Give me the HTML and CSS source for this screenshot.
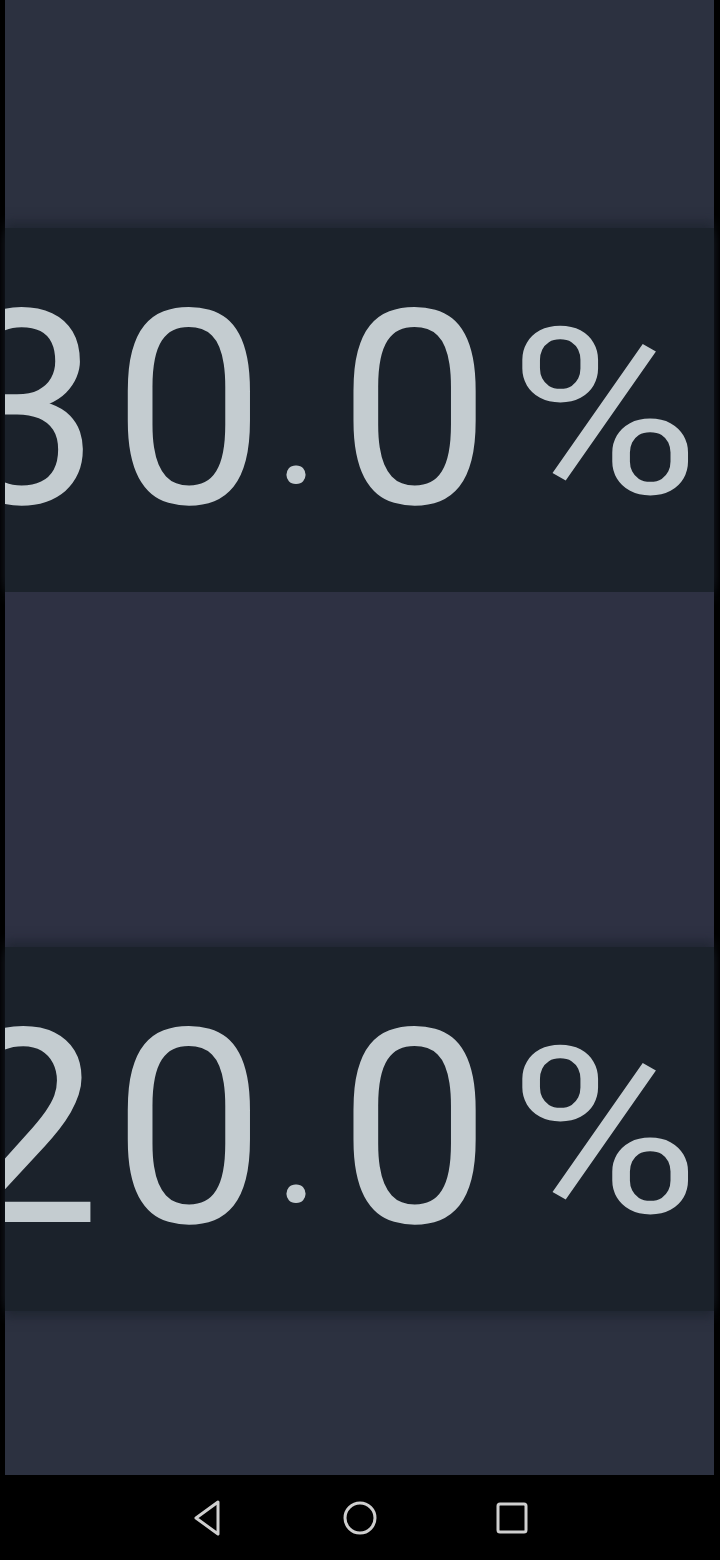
FILE: index.html
```html
<!DOCTYPE html>
<html>
<head>
<meta charset="utf-8">
<link rel="stylesheet" href="styles.css">
</head>
<body>
<div class="screen">
  <div class="spacer top"></div>
  <div class="band">
    <div class="value">30<span class="dot">.</span>0<span class="pct">%</span></div>
  </div>
  <div class="spacer mid"></div>
  <div class="band">
    <div class="value">20<span class="dot">.</span>0<span class="pct">%</span></div>
  </div>
  <div class="spacer rest"></div>
</div>
<div class="nav">
  <svg class="nav-icon" width="40" height="40" viewBox="0 0 40 40"><path d="M30 4 L8 20 L30 36 Z" fill="none" stroke="#cfcfcf" stroke-width="3" stroke-linejoin="round"/></svg>
  <svg class="nav-icon" width="40" height="40" viewBox="0 0 40 40"><circle cx="20" cy="20" r="15" fill="none" stroke="#cfcfcf" stroke-width="3"/></svg>
  <svg class="nav-icon" width="40" height="40" viewBox="0 0 40 40"><rect x="6" y="6" width="28" height="28" rx="2" fill="none" stroke="#cfcfcf" stroke-width="3"/></svg>
</div>
</body>
</html>
```
FILE: styles.css
```css
html, body {
  margin: 0;
  padding: 0;
  background: #000;
}
.screen {
  height: 1475px;
  margin: 0 6px 0 5px;
  background: #2c3140;
  display: flex;
  flex-direction: column;
}
.spacer.top { height: 228px; }
.spacer.mid { height: 355px; background: #2e3143; }
.spacer.rest { flex: 1; }
.band {
  height: 364px;
  background: #1b222b;
  display: flex;
  align-items: center;
  justify-content: flex-end;
  overflow: hidden;
  padding-right: 35px;
  box-sizing: border-box;
  box-shadow: 0 -6px 10px rgba(27,34,43,0.6), 0 6px 10px rgba(27,34,43,0.6);
}
.value {
  font-family: Roboto, "Liberation Sans", sans-serif;
  font-weight: 400;
  font-size: 272px;
  line-height: 1;
  color: #c4ccd0;
  white-space: nowrap;
  letter-spacing: 12px;
}
.dot {
  display: inline-block;
  font-size: 170px;
  letter-spacing: 0;
  margin-left: -3px;
  margin-right: 19px;
  transform: translateY(-20px);
}
.pct {
  display: inline-block;
  font-size: 232px;
  letter-spacing: 0;
  margin-left: 6px;
  transform: translateY(-10px) scaleX(1.12);
  transform-origin: left bottom;
}
.nav {
  height: 85px;
  display: flex;
  justify-content: center;
  align-items: center;
  gap: 112px;
}
.nav-icon { display: block; }
```
